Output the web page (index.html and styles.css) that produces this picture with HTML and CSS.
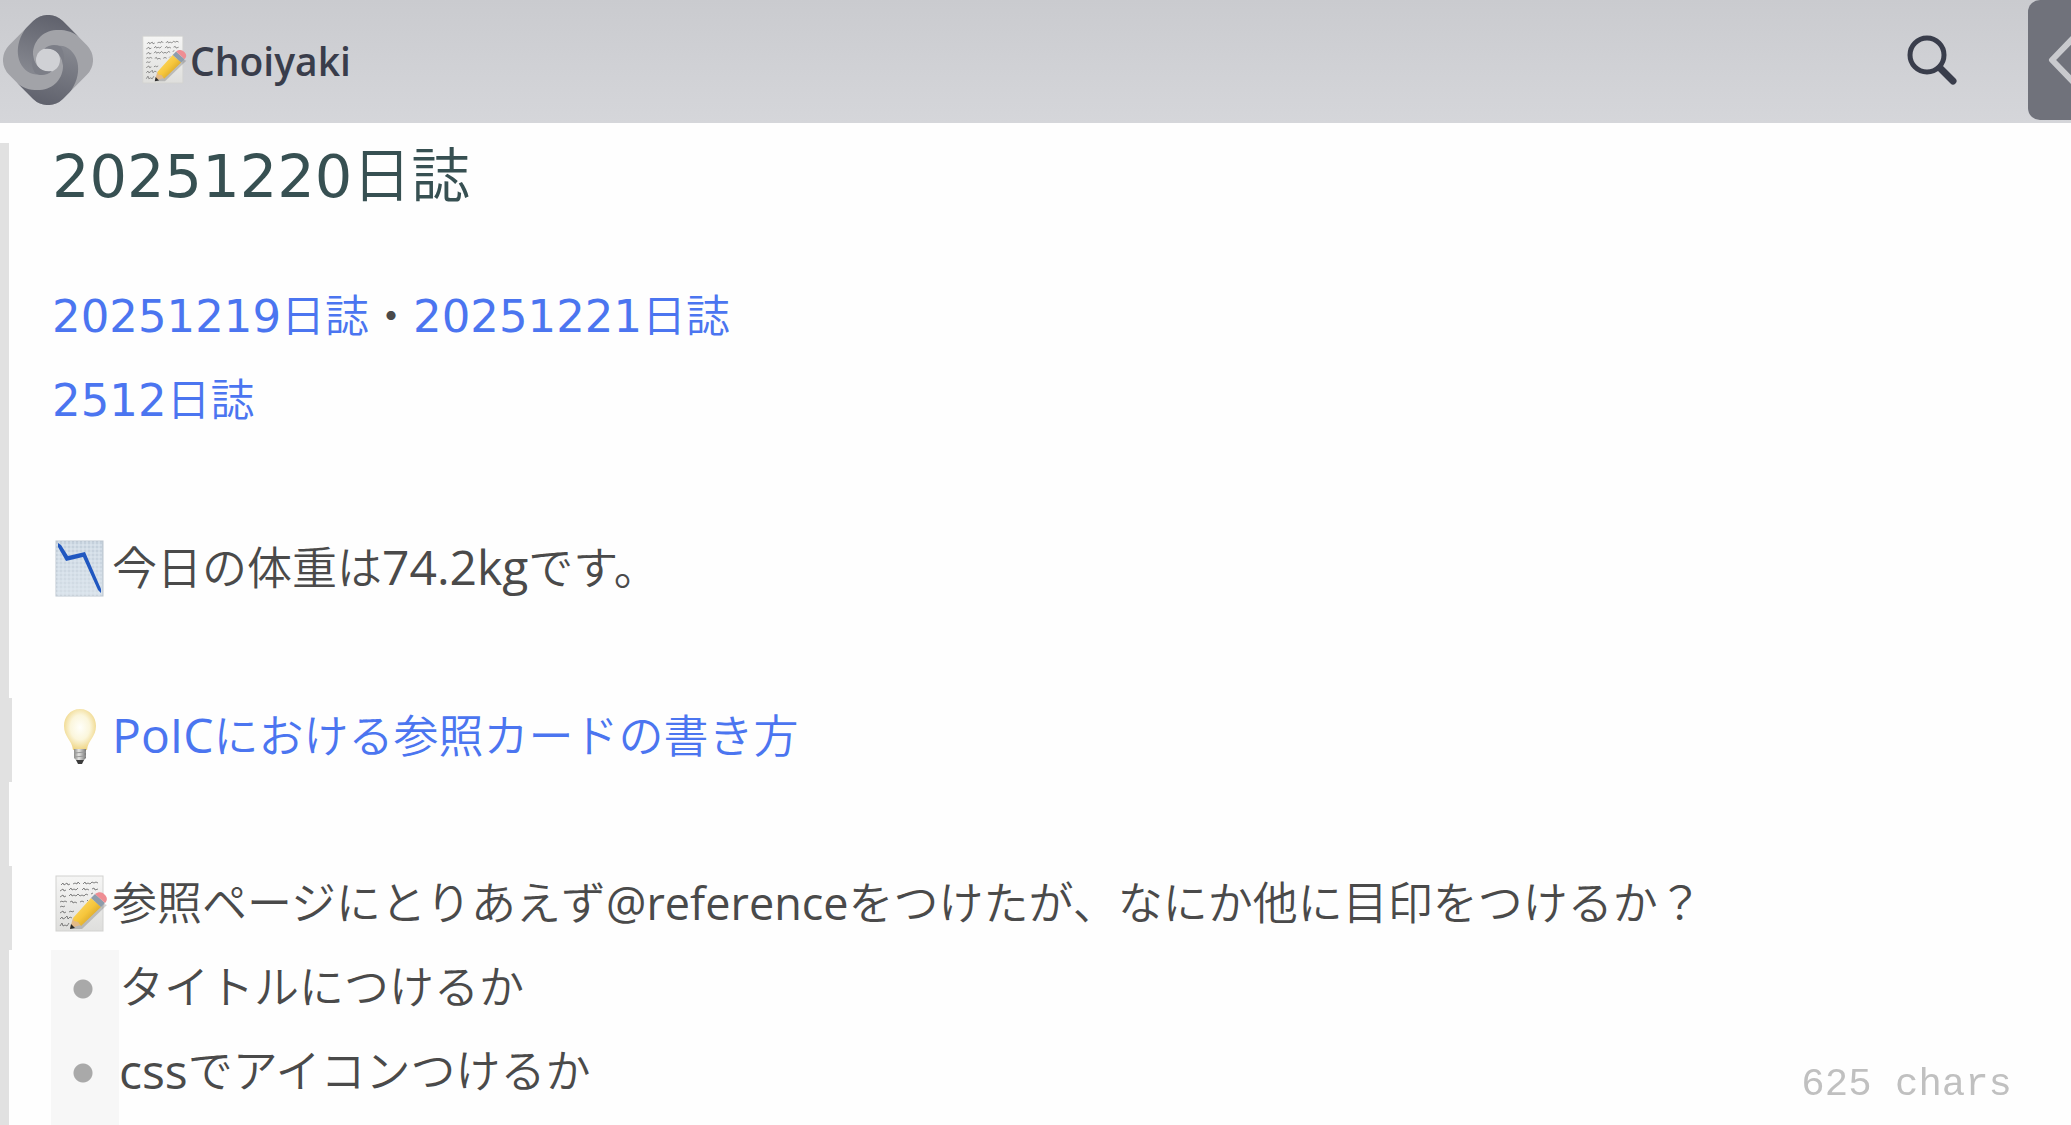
FILE: index.html
```html
<!DOCTYPE html>
<html lang="ja">
<head>
<meta charset="utf-8">
<title>20251220日誌 - Choiyaki</title>
<meta name="viewport" content="width=device-width, initial-scale=1">
<link rel="stylesheet" href="styles.css">
</head>
<body>
<svg class="sprites" aria-hidden="true">
  <defs>
    <linearGradient id="paper" x1="0" y1="0" x2="0" y2="1"><stop offset="0" stop-color="#f6f6f5"/><stop offset="1" stop-color="#dededc"/></linearGradient>
    <linearGradient id="wood" x1="0" y1="0" x2="1" y2="1"><stop offset="0" stop-color="#ffe27a"/><stop offset=".5" stop-color="#f6c63c"/><stop offset="1" stop-color="#b98416"/></linearGradient>
    <symbol id="memo" viewBox="0 0 54 58">
      <rect x="1" y="1" width="47" height="55" fill="url(#paper)" stroke="#d2d2d0"/>
      <g fill="none" stroke="#666" stroke-width=".8">
        <path d="M6 10l2-2 1 2 3-2 1 2 2-1m3 0l2-1 2 1 1-2 2 2m3 0l2-2 1 2 2-1 2 1 2-2 2 1 2-1 2 1"/>
        <path d="M5 16l3-2 1 2 2-1m3 0l2-2 1 2 2-1 2 1 2-2m4 2l2-2 1 2 2-1 2 1m3-1l2-1 1 2 3-1"/>
        <path d="M5 22l3-2 1 2 2-1m3 0l2-2 1 2 2-1 2 1 2-2 2 2 2-1 2 1 2-2 2 1m3-1l2-1"/>
        <path d="M5 27l2-1 1 1 2-1 2 1m3 0l2-1 1 2 2-1 2 1m3-1l2-1 2 1m3-1l1-1"/>
        <path d="M5 32l2-1 1 1 2-1"/>
        <path d="M5 38l3-2 1 2 2-1m3 0l2-1 1 1 2-1M5 44l2-2 1 2 2-1 2-2 1 3 2-2 2 1M5 51l2-3 1 3 2-1 2 1 2-3"/>
      </g>
      <path d="M15 54L42 26 52 30 27 54z" fill="#000" opacity=".18"/>
      <path d="M15 53l3-10 8 7z" fill="#e3b987"/>
      <path d="M15 54l1-5 4 4z" fill="#2c2c2c"/>
      <path d="M18 43L36 23l10 9-20 19-3-4-4-1z" fill="url(#wood)"/>
      <path d="M36 23l4-4 10 9-4 4z" fill="#8d9cab"/>
      <path d="M40 19c4-3 8-2 10 1 2 2 3 5 0 8z" fill="#ee8d93"/>
    </symbol>
    <linearGradient id="grid-fill" x1="0" y1="0" x2="0" y2="1"><stop offset="0" stop-color="#c3cfdb"/><stop offset="1" stop-color="#d5dee6"/></linearGradient>
    <symbol id="chart" viewBox="0 0 54 58">
      <rect x="1" y="1" width="47" height="55" fill="url(#grid-fill)" stroke="#bcc6cf"/>
      <path d="M4 1v55M8 1v55M12 1v55M16 1v55M20 1v55M24 1v55M28 1v55M32 1v55M36 1v55M40 1v55M44 1v55M1 5h46M1 9h46M1 13h46M1 17h46M1 21h46M1 25h46M1 29h46M1 33h46M1 37h46M1 41h46M1 45h46M1 49h46M1 53h46" stroke="#dfe8f0" stroke-width="1"/>
      <path d="M3 3l3 2 7 11 17-4 16 37v4l-3-3L28 17l-17 4-8-14z" fill="#2057c0"/>
    </symbol>
    <radialGradient id="glow" cx=".5" cy=".45" r=".6"><stop offset="0" stop-color="#fffffa"/><stop offset=".5" stop-color="#fbf6dc"/><stop offset="1" stop-color="#edcf74"/></radialGradient>
    <linearGradient id="metal" x1="0" y1="0" x2="1" y2="0"><stop offset="0" stop-color="#8a8a88"/><stop offset=".4" stop-color="#e5e5e3"/><stop offset="1" stop-color="#777"/></linearGradient>
    <symbol id="bulb" viewBox="0 0 54 58">
      <path d="M25 1c10 0 16 8 16 17 0 11-8 14-9 24H18C17 32 9 29 9 18 9 9 15 1 25 1z" fill="url(#glow)"/>
      <path d="M19 41h12v9l-3 3h-6l-3-3z" fill="url(#metal)"/>
      <path d="M19 45l12-1M19 49l12-1" stroke="#999" fill="none"/>
      <path d="M21 52h8l-2 4h-4z" fill="#3c3c3c"/>
    </symbol>
  </defs>
</svg>

<header class="navbar">
  <a class="home" href="#" aria-label="Home">
    <svg class="logo" viewBox="0 0 90 90" aria-hidden="true">
      <defs>
        <linearGradient id="arm-top" x1=".7" y1="0" x2=".4" y2="1"><stop offset="0" stop-color="#5e606b"/><stop offset="1" stop-color="#85878f"/></linearGradient>
        <linearGradient id="arm-bottom" x1=".3" y1="1" x2=".6" y2="0"><stop offset="0" stop-color="#5e606b"/><stop offset="1" stop-color="#85878f"/></linearGradient>
        <clipPath id="logo-shape"><rect x="7" y="7" width="76" height="76" rx="21" transform="rotate(45 45 45)"/></clipPath>
      </defs>
      <g clip-path="url(#logo-shape)">
        <path d="M0 0h90v90H0z" fill="#a2a3a8"/>
        <path d="M21 16L30 0h30l16 22C68 15 60 15 53 15 39 16 30 27 30 39c0 11 8 18 18 17-4 4-12 4-18 3C14 54 10 33 21 16z" fill="url(#arm-top)"/>
        <path d="M69 74L60 90H30L14 68c8 7 16 7 23 7 14-1 23-12 23-24 0-11-8-18-18-17 4-4 12-4 18-3 16 5 20 26 9 43z" fill="url(#arm-bottom)"/>
      </g>
      <circle cx="45" cy="45" r="12" fill="#d0d1d5"/>
      <path d="M30 40c1 10 8 18 19 16-5 5-13 5-17 2-3-5-4-12-2-18z" fill="#7c7e87"/>
      <path d="M60 50c-1-10-8-18-19-16 5-5 13-5 17-2 3 5 4 12 2 18z" fill="#7c7e87"/>
    </svg>
  </a>
  <a class="project" href="#"><svg class="project-icon" viewBox="0 0 54 58" aria-hidden="true"><use href="#memo"/></svg><span>Choiyaki</span></a>
  <button class="search" type="button" aria-label="検索">
    <svg viewBox="0 0 52 52" aria-hidden="true"><circle cx="21" cy="21" r="17" fill="none" stroke="#393d4b" stroke-width="5"/><path d="M34 34l13 13" stroke="#393d4b" stroke-width="7" stroke-linecap="round"/></svg>
  </button>
  <button class="drawer" type="button" aria-label="メニューを開く">
    <svg viewBox="0 0 43 120" aria-hidden="true"><path d="M54 29L24 60l30 31" fill="none" stroke="#c9cace" stroke-width="6" stroke-linejoin="round"/></svg>
  </button>
</header>

<main class="page">
  <h1 class="line title"><span class="digits">20251220</span>日誌</h1>
  <p class="line date"><a href="#"><span class="digits">20251219</span>日誌</a>・<a href="#"><span class="digits">20251221</span>日誌</a></p>
  <p class="line date"><a href="#"><span class="digits">2512</span>日誌</a></p>
  <p class="line"></p>
  <p class="line"><svg class="emoji" viewBox="0 0 54 58" role="img" aria-label="グラフ"><use href="#chart"/></svg>今日の体重は<span class="latin">74.2kg</span>です。</p>
  <p class="line"></p>
  <p class="line updated"><svg class="emoji" viewBox="0 0 54 58" role="img" aria-label="電球"><use href="#bulb"/></svg><a href="#"><span class="latin">PoIC</span>における参照カードの書き方</a></p>
  <p class="line"></p>
  <p class="line updated"><svg class="emoji" viewBox="0 0 54 58" role="img" aria-label="メモ"><use href="#memo"/></svg>参照ページにとりあえず<span class="mention">@reference</span>をつけたが、なにか他に目印をつけるか？</p>
  <ul class="list">
    <li class="line item">タイトルにつけるか</li>
    <li class="line item"><span class="latin">css</span>でアイコンつけるか</li>
    <li class="line item"></li>
  </ul>
</main>
<div class="counter">625 chars</div>
</body>
</html>
```
FILE: styles.css
```css
* { box-sizing: border-box; }

body {
  margin: 0;
  height: 100vh;
  overflow: hidden;
  background: #fefefe;
  color: #4a4a4a;
  font-family: "Open Sans", "Noto Sans CJK JP", sans-serif;
  font-size: 45px;
  font-weight: 350;
}

a { color: #4b75f0; text-decoration: none; }

button { border: 0; padding: 0; background: none; }

svg { display: block; }

.sprites { position: absolute; width: 0; height: 0; }

.navbar {
  display: flex;
  align-items: flex-start;
  height: 123px;
  padding-left: 3px;
  background: linear-gradient(#cacbcf, #d5d6da);
}

.home { padding-top: 15px; }

.logo { width: 90px; height: 90px; }

.project {
  display: flex;
  align-items: center;
  gap: 2px;
  height: 120px;
  margin-left: 49px;
  color: #393d4b;
  font-size: 39px;
  font-weight: 600;
}

.project-icon { width: 46px; height: 50px; }

.search { margin: 34px 70px 0 auto; }

.search svg { width: 52px; height: 52px; }

.drawer {
  height: 120px;
  border-radius: 12px 0 0 12px;
  background: #70727b;
  overflow: hidden;
}

.drawer svg { width: 43px; height: 120px; }

.page {
  height: calc(100vh - 123px);
  padding-top: 20px;
  overflow: hidden;
}

.line {
  margin: 0;
  height: 84px;
  padding-left: 43px;
  border-left: 9px solid #e1e1e1;
  line-height: 74px;
  white-space: nowrap;
}

.updated { padding-left: 40px; border-left-width: 12px; }

.title {
  height: 135px;
  color: #375052;
  font-size: 59px;
  font-weight: 350;
  line-height: 62px;
}

.date { font-size: 44px; }

.digits { font-family: "DejaVu Sans", sans-serif; font-weight: 400; }

.date .digits { font-size: 45px; }

.latin { font-size: 48px; font-weight: 400; }

.mention { font-size: 45px; font-weight: 400; }

.emoji {
  display: inline-block;
  width: 54px;
  height: 58px;
  margin: 0 3px;
  vertical-align: -13px;
}

.list { margin: 0; padding: 0; list-style: none; }

.item { display: flex; padding-left: 42px; }

.item::before {
  content: "";
  width: 68px;
  height: 84px;
  background: radial-gradient(circle at 32px 39px, #a9a9a9 9px, #f7f7f7 10px);
}

.counter {
  position: fixed;
  right: 59px;
  bottom: 16px;
  color: #c0c0c0;
  font-family: "Liberation Mono", monospace;
  font-size: 39px;
  font-weight: 400;
  line-height: 48px;
}
```
